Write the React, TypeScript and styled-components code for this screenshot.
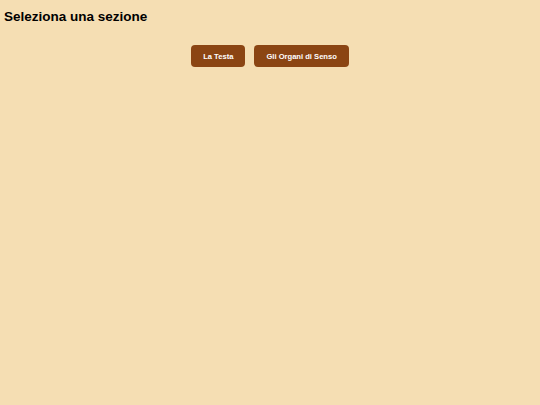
import React from 'react';
import styled, {createGlobalStyle} from 'styled-components';

const GlobalStyle = createGlobalStyle`
  html, body {
    margin: 0;
    padding: 0;
    background-color: #f5deb3;
    font-family: "Liberation Sans", Arial, sans-serif;
  }
`

const Page = styled.div`
  min-height: 405px;
  padding: 9px 4px;
  box-sizing: border-box;
`

const Title = styled.h2`
  font-size: 13.5px;
  line-height: 16px;
  font-weight: bold;
  margin: 0 0 20px;
  color: #000;
`

const Nav = styled.div`
  display: flex;
  justify-content: center;
  gap: 9px;
`

const SectionButton = styled.button`
  background-color: #8b4513;
  color: #fff;
  border: none;
  border-radius: 4px;
  height: 22px;
  padding: 0 12px;
  font-family: "Liberation Sans", Arial, sans-serif;
  font-size: 7.6px;
  font-weight: bold;
  cursor: pointer;
`

const sections = ['La Testa', 'Gli Organi di Senso'];

const App: React.FC = () => {
  return (
    <>
      <GlobalStyle />
      <Page>
        <Title>Seleziona una sezione</Title>
        <Nav>
          {sections.map((s) => (
            <SectionButton key={s}>{s}</SectionButton>
          ))}
        </Nav>
      </Page>
    </>
  )
}

export default App;
